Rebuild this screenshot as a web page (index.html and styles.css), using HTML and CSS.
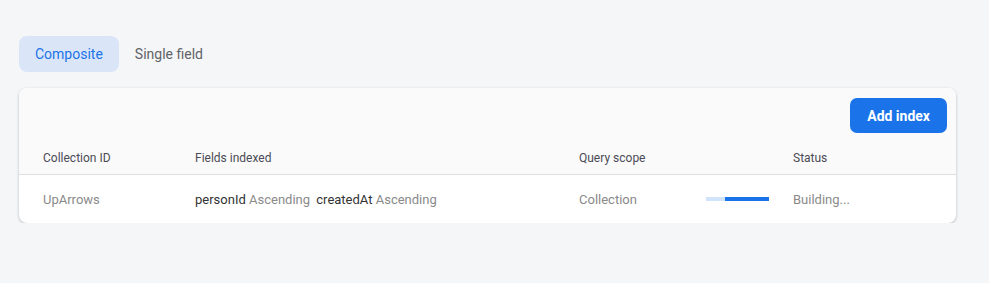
FILE: index.html
```html
<!DOCTYPE html>
<html lang="en">
<head>
    <meta charset="UTF-8">
    <title>Indexes</title>
    <link rel="stylesheet" href="styles.css">
</head>
<body>
    <div class="tabs">
        <button class="tab active">Composite</button>
        <button class="tab">Single field</button>
    </div>

    <div class="card">
        <div class="toolbar">
            <button class="add-btn">Add index</button>
        </div>
        <div class="row head">
            <div class="col c-id">Collection ID</div>
            <div class="col c-fields">Fields indexed</div>
            <div class="col c-scope">Query scope</div>
            <div class="col c-progress"></div>
            <div class="col c-status">Status</div>
        </div>
        <div class="row body-row">
            <div class="col c-id muted">UpArrows</div>
            <div class="col c-fields">
                <span class="field">personId</span> <span class="muted">Ascending</span>
                <span class="field gap">createdAt</span> <span class="muted">Ascending</span>
            </div>
            <div class="col c-scope muted">Collection</div>
            <div class="col c-progress">
                <div class="progress"><div class="progress-fill"></div></div>
            </div>
            <div class="col c-status muted">Building...</div>
        </div>
    </div>
</body>
</html>
```

FILE: styles.css
```css
body {
    font-family: Roboto, "Liberation Sans", Arial, sans-serif;
    background-color: #f5f6f8;
    margin: 0;
    padding: 36px 33px 0 19px;
}

.tabs {
    display: flex;
    margin-bottom: 16px;
}

.tab {
    font-family: inherit;
    font-size: 14px;
    height: 36px;
    padding: 0 16px;
    border: none;
    border-radius: 8px;
    background: transparent;
    color: #5f6368;
    cursor: pointer;
}

.tab.active {
    background-color: #dae6f8;
    color: #1a73e8;
}

.card {
    background-color: #fff;
    border-radius: 8px;
    box-shadow: 0 1px 3px rgba(0, 0, 0, 0.25);
    overflow: hidden;
}

.toolbar {
    display: flex;
    justify-content: flex-end;
    background-color: #fafafa;
    padding: 10px 9px 0 0;
}

.add-btn {
    font-family: inherit;
    font-size: 14px;
    font-weight: bold;
    color: #fff;
    background-color: #1a73e8;
    border: none;
    border-radius: 7px;
    height: 35px;
    padding: 0 17px;
    cursor: pointer;
}

.row {
    display: flex;
    align-items: center;
    padding-left: 24px;
}

.head {
    background-color: #fafafa;
    height: 42px;
    align-items: flex-end;
    box-sizing: border-box;
    font-size: 12px;
    line-height: 14px;
    color: #4a4a55;
    border-bottom: 1px solid #e0e0e0;
}

.head .col {
    padding-bottom: 9px;
}

.body-row {
    height: 48px;
    font-size: 13px;
}

.c-id { width: 152px; }
.c-fields { width: 384px; }
.c-scope { width: 127px; }
.c-progress { width: 87px; }

.muted { color: #8a8a8a; }

.field { color: #333; }

.field.gap { margin-left: 3px; }

.progress {
    width: 63px;
    height: 4px;
    background-color: #d2e3fc;
    position: relative;
}

.progress-fill {
    position: absolute;
    left: 19px;
    top: 0;
    width: 44px;
    height: 4px;
    background-color: #1a73e8;
}
```
